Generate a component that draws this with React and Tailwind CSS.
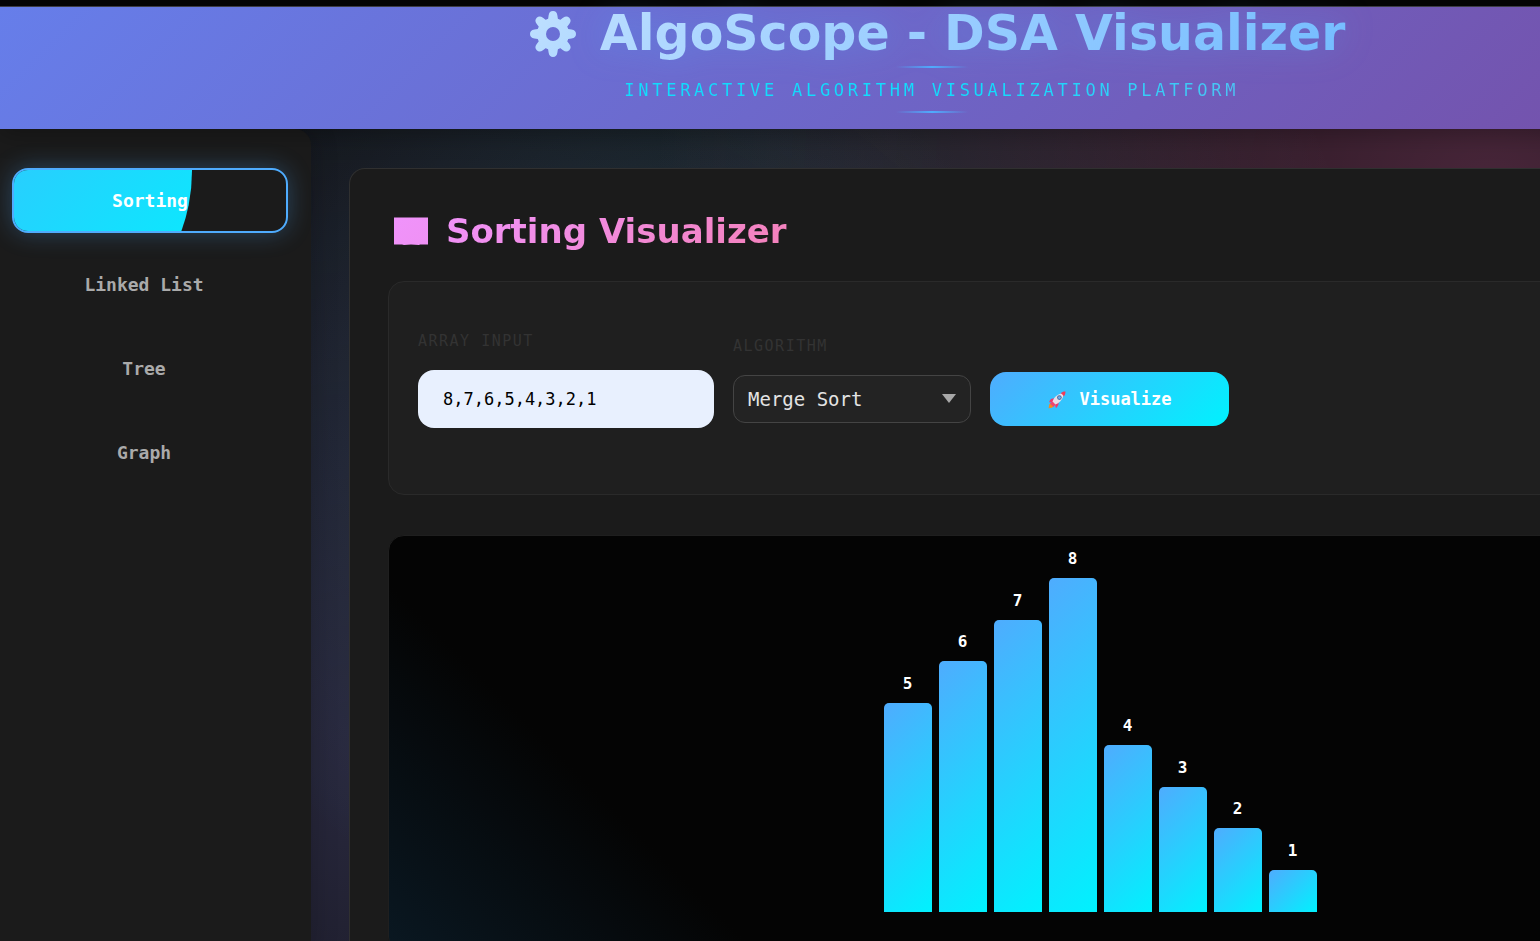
import { useState } from "react";

const MONO = "font-['DejaVu_Sans_Mono','Liberation_Mono',monospace]";
const DISPLAY = "font-['DejaVu_Sans',Inter,sans-serif] font-bold";

const SECTIONS = ["Sorting", "Linked List", "Tree", "Graph"];
const ALGORITHMS = ["Merge Sort", "Quick Sort", "Bubble Sort", "Insertion Sort"];
const BARS = [5, 6, 7, 8, 4, 3, 2, 1];
const MAX_BAR_HEIGHT = 334;

function GearIcon() {
  const angles = [0, 45, 90, 135, 180, 225, 270, 315];
  return (
    <svg viewBox="0 0 46 46" className="size-[46px] shrink-0" aria-hidden="true">
      <defs>
        <linearGradient id="gear" x1="0" y1="0" x2="1" y2="1">
          <stop offset="0" stopColor="#bfe0ff" />
          <stop offset="1" stopColor="#b2d9ff" />
        </linearGradient>
        <mask id="gear-shape">
          <circle cx="23" cy="23" r="16" fill="#fff" />
          {angles.map((a) => (
            <path key={a} d="M16.5 16 Q18.2 9 18.6 4.4 Q19.2 0 23 0 Q26.8 0 27.4 4.4 Q27.8 9 29.5 16 Z" fill="#fff" transform={`rotate(${a} 23 23)`} />
          ))}
          <circle cx="23" cy="23" r="7" fill="#000" />
        </mask>
      </defs>
      <rect width="46" height="46" fill="url(#gear)" mask="url(#gear-shape)" />
    </svg>
  );
}

function ChartIcon() {
  return (
    <svg viewBox="0 0 34 28" className="h-7 w-[34px] shrink-0" aria-hidden="true">
      <defs>
        <linearGradient id="chart" x1="0" y1="0" x2="1" y2="1">
          <stop offset="0" stopColor="#f093fb" />
          <stop offset="1" stopColor="#ef91f4" />
        </linearGradient>
      </defs>
      <path d="M0 .5 H34 V27.5 H26 L25 28 L17 27.5 L10 28 L8 27.5 H0 Z" fill="url(#chart)" />
    </svg>
  );
}

function RocketIcon() {
  return (
    <svg viewBox="0 0 20 20" className="size-5 shrink-0" aria-hidden="true">
      <path d="M2.4 14 L5 14.4 L6.6 16.2 L5 17.8 L1.6 18.2 Z" fill="#f58a1f" />
      <path d="M2.2 12.2 Q3 8.8 6 8.6 L8.6 8.6 L6 12.4 Z" fill="#f0396b" />
      <path d="M8 13.6 L11.8 11.4 Q12 15 9.6 17.8 L8.6 17.4 Z" fill="#f0396b" />
      <path d="M5 13.4 C6 8.2 9.8 4 16.8 3 C16.4 9.6 12 13.6 7 15 Z" fill="#e6dfea" />
      <path d="M13.8 3.2 C15 2 16.8 1.4 18.4 1.6 C18.6 3.4 18 5 16.8 6.4 C16.2 5 15.2 4 13.8 3.2 Z" fill="#f03a57" />
      <circle cx="12.4" cy="7.6" r="2.3" fill="#4a6a9c" />
      <circle cx="12.4" cy="7.6" r="1.4" fill="#6fb1f2" />
      <path d="M2.8 13.6 L5.6 11.6 L8.4 14.4 L6.6 17 Z" fill="#f0466f" />
    </svg>
  );
}

function AccentLine() {
  return <div className="h-0.5 w-[72px] bg-[linear-gradient(90deg,transparent,#4facfe,transparent)]" />;
}

function Header() {
  return (
    <header className="relative z-10 flex h-[123px] shrink-0 flex-col items-center border-t border-[#3d3d45] bg-[linear-gradient(135deg,#667eea,#764ba2)] shadow-[0_4px_24px_rgba(0,0,0,0.3)]">
      <div className="flex items-center gap-6 pb-[5px] pl-3">
        <GearIcon />
        <h1 className={`${DISPLAY} bg-[linear-gradient(135deg,#b8dcff,#74bcff)] bg-clip-text text-[49px] leading-[54px] whitespace-nowrap text-transparent drop-shadow-[0_0_16px_rgba(79,172,254,0.3)]`}>
          AlgoScope - DSA Visualizer
        </h1>
      </div>
      <AccentLine />
      <p className={`${MONO} bg-[linear-gradient(90deg,#12dcfd_0%,#12dcfd_60%,#4cc4f4_100%)] bg-clip-text pt-0.5 text-[17px] leading-[41px] tracking-[0.22em] whitespace-nowrap text-transparent uppercase`}>
        Interactive Algorithm Visualization Platform
      </p>
      <AccentLine />
    </header>
  );
}

function Sidebar({ active, onSelect }) {
  return (
    <aside className="w-[311px] shrink-0 rounded-tr-2xl bg-[#1b1b1b] pt-[39px] shadow-[4px_0_24px_rgba(0,0,0,0.15)]">
      <nav className="flex flex-col gap-[19px]">
        {SECTIONS.map((name) =>
          name === active ? (
            <button
              key={name}
              type="button"
              aria-current="page"
              className={`${MONO} relative ml-3 mr-[23px] h-[65px] overflow-hidden rounded-2xl border-2 border-[#4facfe] text-lg font-bold text-white shadow-[0_0_24px_rgba(79,172,254,0.3)]`}
            >
              <span className="absolute -top-[174px] -left-[172px] size-[350px] rounded-full bg-[linear-gradient(135deg,#4facfe,#00f2fe)]" />
              <span className="relative">{name}</span>
            </button>
          ) : (
            <button
              key={name}
              type="button"
              onClick={() => onSelect(name)}
              className={`${MONO} ml-1.5 mr-[29px] h-[65px] rounded-2xl border-2 border-transparent text-lg font-bold text-[#aaaaaa]`}
            >
              {name}
            </button>
          )
        )}
      </nav>
    </aside>
  );
}

function Controls() {
  const [values, setValues] = useState("8,7,6,5,4,3,2,1");
  const [algorithm, setAlgorithm] = useState("Merge Sort");
  const label = `${MONO} text-[15px] leading-[22px] tracking-widest text-[#333333] uppercase`;
  return (
    <form
      onSubmit={(e) => e.preventDefault()}
      className="flex items-center gap-[19px] rounded-2xl border border-[#2a2a2a] bg-[#1f1f1f] px-[29px] pt-12 pb-[26px]"
    >
      <div className="flex w-[296px] flex-col gap-[18px] pb-10">
        <label htmlFor="array" className={label}>Array Input</label>
        <input
          id="array"
          value={values}
          onChange={(e) => setValues(e.target.value)}
          className={`${MONO} h-[58px] w-full rounded-2xl bg-[#e8f0fe] px-[25px] text-[17px] text-black outline-none`}
        />
      </div>
      <div className="flex w-[238px] flex-col gap-[18px] pb-10">
        <label htmlFor="algorithm" className={label}>Algorithm</label>
        <div className="relative">
          <select
            id="algorithm"
            value={algorithm}
            onChange={(e) => setAlgorithm(e.target.value)}
            className={`${MONO} h-12 w-full appearance-none rounded-xl border border-[#444444] bg-[#232323] px-3.5 text-[19px] text-[#e4e4e4] outline-none`}
          >
            {ALGORITHMS.map((name) => (
              <option key={name}>{name}</option>
            ))}
          </select>
          <svg viewBox="0 0 14 9" className="pointer-events-none absolute top-[19px] right-[15px] h-[9px] w-3.5" aria-hidden="true">
            <path d="M0 0 H14 L7 9 Z" fill="#a8a8a8" />
          </svg>
        </div>
      </div>
      <button
        type="submit"
        className={`${MONO} flex h-[54px] w-[239px] items-center justify-center gap-3 rounded-2xl bg-[linear-gradient(135deg,#4facfe,#00f2fe)] pt-0.5 text-[17px] font-bold text-white`}
      >
        <RocketIcon />
        Visualize
      </button>
    </form>
  );
}

function BarChart() {
  const max = Math.max(...BARS);
  return (
    <div className="mt-10 flex min-h-[418px] items-end justify-center gap-[7px] rounded-2xl border border-[#1f1f1f] bg-[#040404] bg-[linear-gradient(45deg,#0a1822,#040404_260px)] pb-10">
      {BARS.map((value) => (
        <div key={value} className="flex w-12 flex-col items-center gap-2">
          <span className={`${MONO} text-base leading-[22px] font-bold text-white`}>{value}</span>
          <div
            className="w-full rounded-t-[5px] bg-[linear-gradient(135deg,#4facfe,#00f2fe)]"
            style={{ height: Math.round((value / max) * MAX_BAR_HEIGHT) }}
          />
        </div>
      ))}
    </div>
  );
}

export default function App() {
  const [active, setActive] = useState("Sorting");
  return (
    <div className="h-screen overflow-hidden bg-[#0a0a0a]">
      <div className="flex min-h-full w-[121%] flex-col bg-[radial-gradient(circle_at_20%_80%,rgba(120,119,198,0.27)_0%,transparent_50%),radial-gradient(circle_at_80%_20%,rgba(255,119,198,0.25)_0%,transparent_50%),radial-gradient(circle_at_40%_40%,rgba(120,219,255,0.18)_0%,transparent_50%)]">
        <div className="h-1.5 shrink-0 bg-[#050505]" />
        <Header />
        <div className="flex flex-1">
          <Sidebar active={active} onSelect={setActive} />
          <main className="min-w-0 flex-1 pt-[39px] pr-3 pl-[38px]">
            <section className="rounded-t-2xl border border-b-0 border-[#303030] bg-[#1b1b1b] px-[38px] pt-[38px]">
              <div className="mb-[26px] flex h-12 items-center gap-[18px] pl-1.5">
                <ChartIcon />
                <h2 className={`${DISPLAY} bg-[linear-gradient(135deg,#f093fb,#f5789a)] bg-size-[520px_100%] bg-clip-text text-[34px] leading-[48px] whitespace-nowrap text-transparent`}>
                  Sorting Visualizer
                </h2>
              </div>
              <Controls />
              <BarChart />
            </section>
          </main>
        </div>
      </div>
    </div>
  );
}
